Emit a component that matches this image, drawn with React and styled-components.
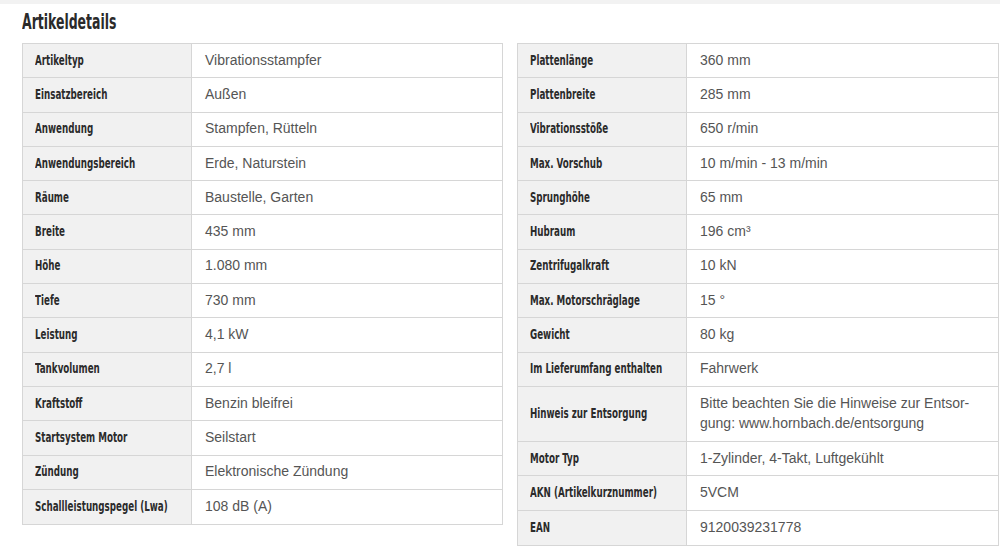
import React from 'react'
import styled, { createGlobalStyle } from 'styled-components'

const GlobalStyle = createGlobalStyle`
  html, body {
    margin: 0;
    padding: 0;
    background: #fff;
  }
  body {
    font-family: "Liberation Sans", Arial, sans-serif;
  }
`

const Page = styled.div`
  width: 1000px;
  height: 552px;
  overflow: hidden;
  background: #fff;
`

const TopStrip = styled.div`
  height: 4px;
  background: #f2f2f2;
`

const Section = styled.section`
  padding: 0 0 0 22px;
`

// condensed look: no narrow font installed, so squeeze DejaVu Condensed
const Narrow = styled.span`
  display: inline-block;
  transform: scaleX(${p => p.$scale});
  transform-origin: left center;
  white-space: nowrap;
`

const Title = styled.h2`
  margin: 0;
  height: 39px;
  display: flex;
  align-items: center;
  font-family: "DejaVu Sans Condensed", "DejaVu Sans", sans-serif;
  font-weight: 700;
  font-size: 21px;
  color: #2a2a2a;
  padding-bottom: 3px;
  box-sizing: border-box;
`

const Columns = styled.div`
  display: grid;
  grid-template-columns: 481px 482px;
  column-gap: 14px;
  align-items: start;
`

const Table = styled.div`
  border: 1px solid #d6d6d6;
  display: flex;
  flex-direction: column;
`

const Row = styled.div`
  display: grid;
  grid-template-columns: ${p => p.$labelWidth}px 1fr;
  height: ${p => (p.$tall ? 55 : 34.3)}px;
  box-sizing: border-box;
  border-bottom: 1px solid #d6d6d6;
  &:last-child {
    border-bottom: none;
  }
`

const Label = styled.div`
  background: #f1f1f1;
  border-right: 1px solid #d6d6d6;
  display: flex;
  align-items: center;
  padding: 0 12px 2px;
  overflow: hidden;
  font-family: "DejaVu Sans Condensed", "DejaVu Sans", sans-serif;
  font-weight: 700;
  font-size: 14.5px;
  color: #2b2b2b;
  white-space: nowrap;
`

const Value = styled.div`
  display: flex;
  align-items: center;
  padding: 0 12px 2px 13px;
  font-size: 14px;
  line-height: 20px;
  color: #555;
  hyphens: manual;
`

const left = [
  ['Artikeltyp', 'Vibrationsstampfer'],
  ['Einsatzbereich', 'Außen'],
  ['Anwendung', 'Stampfen, Rütteln'],
  ['Anwendungsbereich', 'Erde, Naturstein'],
  ['Räume', 'Baustelle, Garten'],
  ['Breite', '435 mm'],
  ['Höhe', '1.080 mm'],
  ['Tiefe', '730 mm'],
  ['Leistung', '4,1 kW'],
  ['Tankvolumen', '2,7 l'],
  ['Kraftstoff', 'Benzin bleifrei'],
  ['Startsystem Motor', 'Seilstart'],
  ['Zündung', 'Elektronische Zündung'],
  ['Schallleistungspegel (Lwa)', '108 dB (A)'],
]

const right = [
  ['Plattenlänge', '360 mm'],
  ['Plattenbreite', '285 mm'],
  ['Vibrationsstöße', '650 r/min'],
  ['Max. Vorschub', '10 m/min - 13 m/min'],
  ['Sprunghöhe', '65 mm'],
  ['Hubraum', '196 cm³'],
  ['Zentrifugalkraft', '10 kN'],
  ['Max. Motorschräglage', '15 °'],
  ['Gewicht', '80 kg'],
  ['Im Lieferumfang enthalten', 'Fahrwerk'],
  ['Hinweis zur Entsorgung', 'Bitte beachten Sie die Hinweise zur Entsor\u00adgung: www.hornbach.de/entsorgung', true],
  ['Motor Typ', '1-Zylinder, 4-Takt, Luftgekühlt'],
  ['AKN (Artikelkurznummer)', '5VCM'],
  ['EAN', '9120039231778'],
]

const DetailTable = ({ rows, labelWidth }) => (
  <Table>
    {rows.map(([label, value, tall]) => (
      <Row key={label} $labelWidth={labelWidth} $tall={tall}>
        <Label><Narrow $scale={0.67}>{label}</Narrow></Label>
        <Value>{value}</Value>
      </Row>
    ))}
  </Table>
)

export default function App() {
  return (
    <Page>
      <GlobalStyle />
      <TopStrip />
      <Section>
        <Title><Narrow $scale={0.66}>Artikeldetails</Narrow></Title>
        <Columns>
          <DetailTable rows={left} labelWidth={169} />
          <DetailTable rows={right} labelWidth={169} />
        </Columns>
      </Section>
    </Page>
  )
}
